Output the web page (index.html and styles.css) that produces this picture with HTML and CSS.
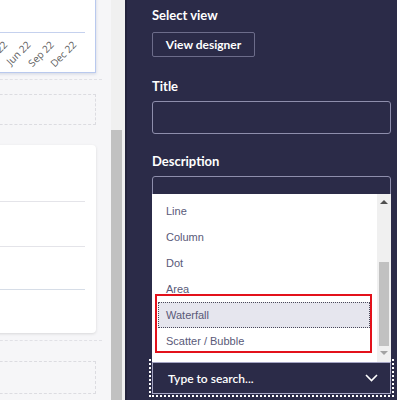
FILE: index.html
```html
<!DOCTYPE html>
<html lang="en">
<head>
    <meta charset="UTF-8">
    <meta name="viewport" content="width=device-width, initial-scale=1.0">
    <title>Chart properties</title>
    <link rel="stylesheet" href="styles.css">
</head>
<body>
    <div class="app">
        <div class="sheet">
            <div class="sheet-content">
                <div class="chart-card">
                    <div class="axis"></div>
                    <div class="ticks">
                        <div class="tick"><span>Mar 22</span></div>
                        <div class="tick"><span>Jun 22</span></div>
                        <div class="tick"><span>Sep 22</span></div>
                        <div class="tick"><span>Dec 22</span></div>
                    </div>
                </div>
                <div class="sep"></div>
                <div class="drop-zone"></div>
                <div class="table-card">
                    <div class="row row-1"></div>
                    <div class="row row-2"></div>
                    <div class="row row-3"></div>
                    <div class="row row-4"></div>
                </div>
                <div class="sep sep-2"></div>
                <div class="drop-zone drop-zone-2"></div>
            </div>
            <div class="vscroll"><div class="thumb"></div></div>
        </div>

        <div class="panel">
            <div class="label">Select view</div>
            <button class="btn">View designer</button>

            <div class="label label-title">Title</div>
            <div class="input"></div>

            <div class="label label-desc">Description</div>
            <div class="input textarea"></div>

            <div class="select-wrap">
                <div class="list">
                    <div class="list-items">
                        <div class="item">Line</div>
                        <div class="item">Column</div>
                        <div class="item">Dot</div>
                        <div class="item">Area</div>
                        <div class="item item-focus">Waterfall</div>
                        <div class="item">Scatter / Bubble</div>
                    </div>
                    <div class="list-scroll">
                        <div class="arrow-up"></div>
                        <div class="list-thumb"></div>
                        <div class="arrow-down"></div>
                    </div>
                    <div class="highlight"></div>
                </div>
                <div class="select">
                    <span>Type to search...</span>
                    <svg width="13" height="8" viewBox="0 0 13 8"><polyline points="1,1 6.5,6.5 12,1" fill="none" stroke="#fff" stroke-width="1.6"/></svg>
                </div>
            </div>
        </div>
    </div>
</body>
</html>
```

FILE: styles.css
```css
* {
    box-sizing: border-box;
}
body {
    margin: 0;
    width: 397px;
    height: 400px;
    overflow: hidden;
    font-family: Lato, "Liberation Sans", sans-serif;
}
.app {
    display: flex;
    height: 400px;
}

/* left sheet */
.sheet {
    display: flex;
    width: 125px;
    background: #f6f6f8;
}
.sheet-content {
    width: 111px;
    overflow: hidden;
}
.chart-card {
    margin: -10px 0 0 -20px;
    width: 116px;
    height: 83px;
    padding-top: 41px;
    background: #fff;
    border: 1px solid #b9c9ee;
    box-shadow: 0 1px 3px rgba(60, 80, 140, 0.2);
}
.axis {
    height: 1px;
    margin-right: 10px;
    background: #c5d1ee;
}
.ticks {
    display: flex;
    margin-left: -2px;
}
.tick {
    width: 23px;
    display: flex;
    justify-content: flex-end;
}
.tick span {
    font-family: "Open Sans", sans-serif;
    font-size: 10px;
    line-height: 11px;
    color: #5c5c5c;
    white-space: nowrap;
    transform: rotate(-45deg);
    transform-origin: 100% 0;
    margin-top: 6px;
}
.sep {
    margin: 6px 0 0 -20px;
    width: 122px;
    border-top: 1px dashed #e1e1e6;
}
.drop-zone {
    margin: 14px 0 0 -20px;
    width: 116px;
    height: 31px;
    border: 1px dashed #dcdce1;
}
.table-card {
    margin: 20px 0 0 -20px;
    width: 116px;
    height: 188px;
    background: #fff;
    border-radius: 4px;
    box-shadow: 0 1px 3px rgba(0, 0, 0, 0.12);
}
.row {
    margin-right: 11px;
    border-bottom: 1px solid #e4e4e9;
}
.row-1 { height: 57px; }
.row-2 { height: 45px; }
.row-3 { height: 43px; border-bottom-color: #d6dde7; }
.row-4 { border-bottom: none; }
.sep-2 {
    margin-top: 7px;
}
.drop-zone-2 {
    margin-top: 20px;
    height: 33px;
}
.vscroll {
    width: 14px;
    background: #f0f0f0;
    padding-top: 130px;
}
.thumb {
    width: 11px;
    height: 270px;
    background: #c1c1c1;
}

/* right panel */
.panel {
    flex: 1;
    background: #2b2b48;
    border-left: 2px solid #23233c;
    padding: 7px 6px 0 25px;
}
.label {
    color: #fff;
    font-weight: bold;
    font-size: 13px;
    line-height: 16px;
}
.btn {
    margin-top: 9px;
    width: 103px;
    height: 25px;
    background: transparent;
    border: 1px solid #6c6c8a;
    border-radius: 2px;
    color: #fff;
    font-family: Lato, "Liberation Sans", sans-serif;
    font-weight: bold;
    font-size: 12px;
    padding: 0;
}
.label-title {
    margin-top: 21px;
}
.input {
    margin-top: 7px;
    height: 33px;
    border: 1px solid #8e8eac;
    border-radius: 3px;
}
.label-desc {
    margin-top: 19px;
}
.textarea {
    height: 150px;
}
.select-wrap {
    position: relative;
    margin-top: 36px;
}
.list {
    position: absolute;
    left: 0;
    right: 0;
    bottom: 100%;
    height: 168px;
    background: #fff;
    display: flex;
}
.list-items {
    flex: 1;
    padding-top: 4px;
}
.item {
    height: 26px;
    line-height: 26px;
    margin: 0 7px 0 6px;
    padding-left: 8px;
    font-family: "Liberation Sans", Arial, sans-serif;
    font-size: 11px;
    color: #595978;
}
.item-focus {
    background: #e6e6ee;
    outline: 1px dotted #4a4a5a;
    outline-offset: -1px;
}
.list-scroll {
    width: 14px;
    background: #f0f0f0;
    display: flex;
    flex-direction: column;
    align-items: center;
    padding-top: 6px;
}
.arrow-up {
    width: 0;
    height: 0;
    border-left: 4px solid transparent;
    border-right: 4px solid transparent;
    border-bottom: 4px solid #505050;
}
.list-thumb {
    margin-top: 58px;
    width: 10px;
    height: 84px;
    background: #c1c1c1;
}
.arrow-down {
    margin-top: 5px;
    width: 0;
    height: 0;
    border-left: 4px solid transparent;
    border-right: 4px solid transparent;
    border-top: 4px solid #a3a3a3;
}
.highlight {
    position: absolute;
    left: 3px;
    top: 100px;
    width: 217px;
    height: 59px;
    border: 2px solid #e3111b;
}
.select {
    height: 32px;
    border: 1px solid #a5a5c4;
    outline: 2px dotted #fff;
    outline-offset: 1px;
    display: flex;
    align-items: center;
    justify-content: space-between;
    padding: 0 12px 0 15px;
    color: #fff;
    font-size: 12px;
    font-weight: 600;
}
```
